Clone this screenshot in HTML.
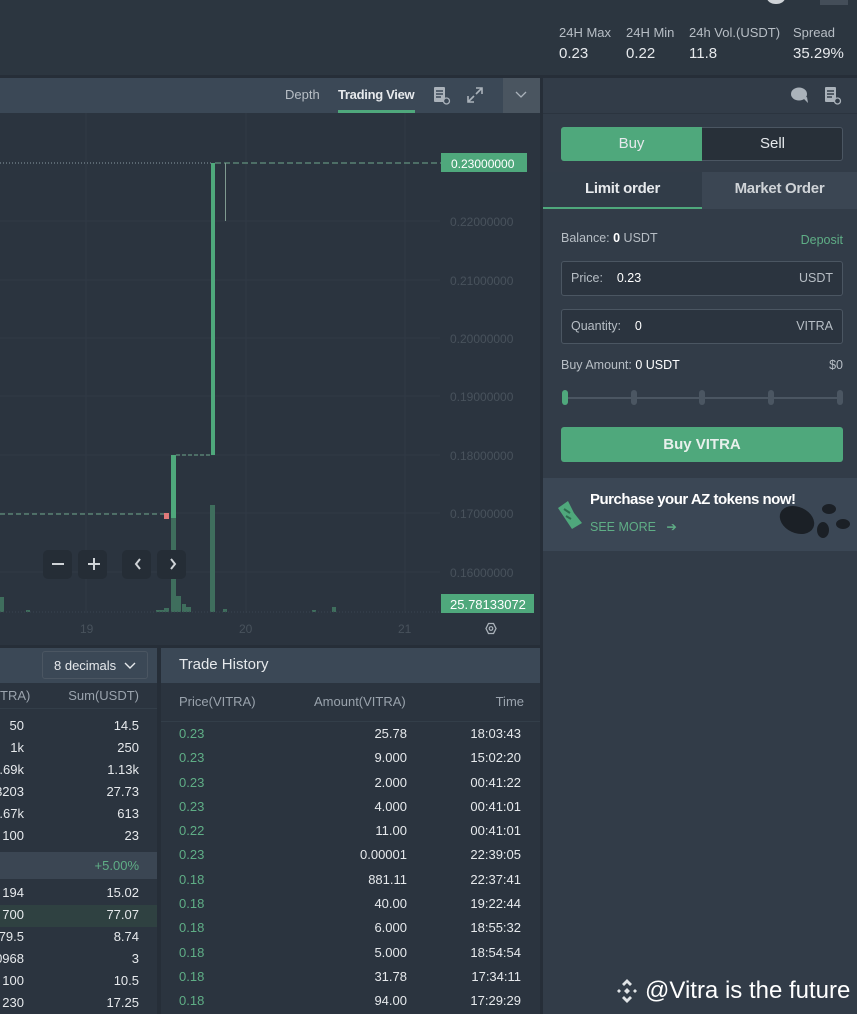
<!DOCTYPE html><html><head><meta charset="utf-8"><style>
*{margin:0;padding:0;box-sizing:border-box}
html,body{width:857px;height:1014px;overflow:hidden}
body{background:#262e38;font-family:"Liberation Sans",sans-serif;position:relative;color:#e6e9ec}
.a{position:absolute;white-space:nowrap}
.g{color:#5fae86}
.m{color:#9aa3ad}
</style></head><body>
<div class="a" style="left:0;top:0;width:857px;height:75px;background:#2c3640"></div>
<div class="a" style="left:767px;top:-8px;width:18px;height:12px;border-radius:50%;background:#cfd3d7"></div>
<div class="a" style="left:820px;top:0;width:28px;height:5px;background:#444e59"></div>
<div class="a" style="left:559px;top:25px;font-size:13px;color:#b7bec5">24H Max</div>
<div class="a" style="left:559px;top:45px;font-size:15px">0.23</div>
<div class="a" style="left:626px;top:25px;font-size:13px;color:#b7bec5">24H Min</div>
<div class="a" style="left:626px;top:45px;font-size:15px">0.22</div>
<div class="a" style="left:689px;top:25px;font-size:13px;color:#b7bec5">24h Vol.(USDT)</div>
<div class="a" style="left:689px;top:45px;font-size:15px">11.8</div>
<div class="a" style="left:793px;top:25px;font-size:13px;color:#b7bec5">Spread</div>
<div class="a" style="left:793px;top:45px;font-size:15px">35.29%</div>

<div class="a" style="left:0;top:78px;width:540px;height:35px;background:#3b4856"></div>
<div class="a" style="left:285px;top:87px;font-size:13px;color:#b7bec5">Depth</div>
<div class="a" style="left:338px;top:87px;font-size:13px;font-weight:bold;letter-spacing:-0.3px">Trading View</div>
<div class="a" style="left:338px;top:110px;width:77px;height:3px;background:#4fa87c"></div>
<svg class="a" style="left:432px;top:86px" width="20" height="20"><rect x="2" y="1" width="11" height="15" rx="1" fill="#aab2ba"/><path d="M4 5h7M4 8h7M4 11h5" stroke="#3b4856" stroke-width="1.4"/><circle cx="14.5" cy="15" r="3" fill="#3b4856" stroke="#aab2ba" stroke-width="1.3"/></svg>
<svg class="a" style="left:466px;top:86px" width="18" height="18" stroke="#aab2ba" stroke-width="1.6" fill="none"><path d="M10 2h6v6M16 2l-6 6M2 10v6h6M2 16l6-6"/></svg>
<div class="a" style="left:503px;top:78px;width:37px;height:35px;background:#4a5560"></div>
<svg class="a" style="left:514px;top:90px" width="14" height="10" stroke="#aab2ba" stroke-width="1.3" fill="none"><path d="M2 2l5 5 5-5"/></svg>

<div class="a" style="left:0;top:113px;width:540px;height:532px;background:#2b343f"></div>
<svg class="a" style="left:0;top:113px" width="540" height="532">
<g stroke="#303a45" stroke-width="1">
<path d="M86 0V500M246 0V500M405 0V500"/>
<path d="M0 108H440M0 167H440M0 225H440M0 283H440M0 342H440M0 400H440M0 459H440"/>
</g>
<path d="M0 50H211" stroke="#8a9aa3" stroke-dasharray="1 2"/>
<path d="M215 50H441" stroke="#6fa88c" stroke-dasharray="6 3"/>
<path d="M0 401H166" stroke="#6fa88c" stroke-dasharray="5 3"/>
<path d="M176 342H211" stroke="#6fa88c" stroke-dasharray="4 2"/>
<rect x="211" y="50" width="4" height="292" fill="#4fa87c"/>
<rect x="225" y="50" width="1" height="58" fill="#7f9a90"/>
<rect x="171" y="342" width="5" height="157" fill="#4fa87c"/>
<rect x="164" y="400" width="5" height="6" fill="#e07a7a"/>
<g fill="#3f6e5d">
<rect x="0" y="484" width="4" height="15"/><rect x="171" y="405" width="5" height="94"/><rect x="176" y="483" width="5" height="16"/><rect x="182" y="491" width="4" height="8"/><rect x="210" y="392" width="5" height="107"/><rect x="223" y="496" width="4" height="3"/><rect x="156" y="497" width="8" height="2"/><rect x="164" y="495" width="5" height="4"/><rect x="186" y="494" width="5" height="5"/><rect x="332" y="494" width="4" height="5"/><rect x="312" y="497" width="4" height="2"/><rect x="26" y="497" width="4" height="2"/></g>
<path d="M0 499H440" stroke="#3a4550" stroke-dasharray="1 2"/>
<g font-family="Liberation Sans" font-size="12" fill="#48525c">
<text x="450" y="113">0.22000000</text><text x="450" y="172">0.21000000</text><text x="450" y="230">0.20000000</text><text x="450" y="288">0.19000000</text><text x="450" y="347">0.18000000</text><text x="450" y="405">0.17000000</text><text x="450" y="464">0.16000000</text>
<text x="80" y="520">19</text><text x="239" y="520">20</text><text x="398" y="520">21</text></g>
<rect x="441" y="40" width="86" height="19" fill="#4fa87c"/>
<text x="451" y="55" font-family="Liberation Sans" font-size="12" fill="#fff">0.23000000</text>
<rect x="441" y="481" width="93" height="19" fill="#4fa87c"/>
<text x="450" y="496" font-family="Liberation Sans" font-size="13" fill="#fff">25.78133072</text>
<path d="M486 515.5l2.5-5h5l2.5 5-2.5 5h-5z" fill="none" stroke="#aab2ba" stroke-width="1.3"/><circle cx="491" cy="515.5" r="1.8" fill="none" stroke="#aab2ba" stroke-width="1.2"/>
<g fill="#252d36"><rect x="43" y="437" width="29" height="29" rx="5"/><rect x="78" y="437" width="29" height="29" rx="5"/><rect x="122" y="437" width="29" height="29" rx="5"/><rect x="157" y="437" width="29" height="29" rx="5"/></g>
<g stroke="#cfd3d7" stroke-width="2" fill="none"><path d="M52 451h12M88 451h12M94 445v12M140 446l-4 5 4 5M171 446l4 5-4 5"/></g>
</svg>

<div class="a" style="left:0;top:648px;width:157px;height:366px;background:#2b343f"></div>
<div class="a" style="left:0;top:648px;width:157px;height:35px;background:#3b4856"></div>
<div class="a" style="left:42px;top:651px;width:106px;height:28px;border:1px solid #4b5662;border-radius:3px;font-size:13px;padding:6px 0 0 11px">8 decimals <svg width="12" height="8" style="margin-left:4px" stroke="#e6e9ec" stroke-width="1.4" fill="none"><path d="M1 1l5 5 5-5"/></svg></div>
<div class="a m" style="left:0;top:688px;font-size:13px">TRA)</div>
<div class="a m" style="right:718px;top:688px;font-size:13px">Sum(USDT)</div>
<div class="a" style="left:0;top:708px;width:157px;height:1px;background:#333e49"></div>
<div class="a" style="left:0;top:852px;width:157px;height:27px;background:#3b4653"></div>
<div class="a g" style="right:718px;top:858px;font-size:13px">+5.00%</div>
<div class="a" style="left:0;top:905px;width:157px;height:22px;background:#2f4141"></div>
<div class="a" style="left:0;top:715px;width:139px;font-size:13px;line-height:22px">
<div style="position:relative;height:22px"><span style="position:absolute;right:115px">50</span><span style="position:absolute;right:0">14.5</span></div>
<div style="position:relative;height:22px"><span style="position:absolute;right:115px">1k</span><span style="position:absolute;right:0">250</span></div>
<div style="position:relative;height:22px"><span style="position:absolute;right:115px">.69k</span><span style="position:absolute;right:0">1.13k</span></div>
<div style="position:relative;height:22px"><span style="position:absolute;right:115px">3203</span><span style="position:absolute;right:0">27.73</span></div>
<div style="position:relative;height:22px"><span style="position:absolute;right:115px">.67k</span><span style="position:absolute;right:0">613</span></div>
<div style="position:relative;height:22px"><span style="position:absolute;right:115px">100</span><span style="position:absolute;right:0">23</span></div>
</div>
<div class="a" style="left:0;top:882px;width:139px;font-size:13px;line-height:22px">
<div style="position:relative;height:22px"><span style="position:absolute;right:115px">194</span><span style="position:absolute;right:0">15.02</span></div>
<div style="position:relative;height:22px"><span style="position:absolute;right:115px">700</span><span style="position:absolute;right:0">77.07</span></div>
<div style="position:relative;height:22px"><span style="position:absolute;right:115px">79.5</span><span style="position:absolute;right:0">8.74</span></div>
<div style="position:relative;height:22px"><span style="position:absolute;right:115px">0968</span><span style="position:absolute;right:0">3</span></div>
<div style="position:relative;height:22px"><span style="position:absolute;right:115px">100</span><span style="position:absolute;right:0">10.5</span></div>
<div style="position:relative;height:22px"><span style="position:absolute;right:115px">230</span><span style="position:absolute;right:0">17.25</span></div>
</div>

<div class="a" style="left:161px;top:648px;width:379px;height:366px;background:#2b343f"></div>
<div class="a" style="left:161px;top:648px;width:379px;height:35px;background:#3b4856"></div>
<div class="a" style="left:179px;top:656px;font-size:15px">Trade History</div>
<div class="a m" style="left:179px;top:694px;font-size:13px">Price(VITRA)</div>
<div class="a m" style="left:314px;top:694px;font-size:13px">Amount(VITRA)</div>
<div class="a m" style="right:333px;top:694px;font-size:13px">Time</div>
<div class="a" style="left:161px;top:721px;width:379px;height:1px;background:#333e49"></div>
<div class="a" style="left:179px;top:722px;width:342px;font-size:13px;line-height:24.3px">
<div style="position:relative;height:24.3px"><span class="g">0.23</span><span style="position:absolute;right:114px">25.78</span><span style="position:absolute;right:0">18:03:43</span></div>
<div style="position:relative;height:24.3px"><span class="g">0.23</span><span style="position:absolute;right:114px">9.000</span><span style="position:absolute;right:0">15:02:20</span></div>
<div style="position:relative;height:24.3px"><span class="g">0.23</span><span style="position:absolute;right:114px">2.000</span><span style="position:absolute;right:0">00:41:22</span></div>
<div style="position:relative;height:24.3px"><span class="g">0.23</span><span style="position:absolute;right:114px">4.000</span><span style="position:absolute;right:0">00:41:01</span></div>
<div style="position:relative;height:24.3px"><span class="g">0.22</span><span style="position:absolute;right:114px">11.00</span><span style="position:absolute;right:0">00:41:01</span></div>
<div style="position:relative;height:24.3px"><span class="g">0.23</span><span style="position:absolute;right:114px">0.00001</span><span style="position:absolute;right:0">22:39:05</span></div>
<div style="position:relative;height:24.3px"><span class="g">0.18</span><span style="position:absolute;right:114px">881.11</span><span style="position:absolute;right:0">22:37:41</span></div>
<div style="position:relative;height:24.3px"><span class="g">0.18</span><span style="position:absolute;right:114px">40.00</span><span style="position:absolute;right:0">19:22:44</span></div>
<div style="position:relative;height:24.3px"><span class="g">0.18</span><span style="position:absolute;right:114px">6.000</span><span style="position:absolute;right:0">18:55:32</span></div>
<div style="position:relative;height:24.3px"><span class="g">0.18</span><span style="position:absolute;right:114px">5.000</span><span style="position:absolute;right:0">18:54:54</span></div>
<div style="position:relative;height:24.3px"><span class="g">0.18</span><span style="position:absolute;right:114px">31.78</span><span style="position:absolute;right:0">17:34:11</span></div>
<div style="position:relative;height:24.3px"><span class="g">0.18</span><span style="position:absolute;right:114px">94.00</span><span style="position:absolute;right:0">17:29:29</span></div>
</div>

<div class="a" style="left:543px;top:78px;width:314px;height:936px;background:#323c48"></div>
<div class="a" style="left:543px;top:113px;width:314px;height:1px;background:#2b343f"></div>
<svg class="a" style="left:789px;top:86px" width="22" height="20"><ellipse cx="10" cy="8" rx="8" ry="6.5" fill="#aab2ba"/><path d="M14 12l5 5-1-6z" fill="#aab2ba"/></svg>
<svg class="a" style="left:823px;top:86px" width="20" height="20"><rect x="2" y="1" width="11" height="15" rx="1" fill="#aab2ba"/><path d="M4 5h7M4 8h7M4 11h5" stroke="#323c48" stroke-width="1.4"/><circle cx="14.5" cy="15" r="3" fill="#323c48" stroke="#aab2ba" stroke-width="1.3"/></svg>
<div class="a" style="left:561px;top:127px;width:282px;height:34px;border:1px solid #4b5662;border-radius:3px;background:#283039"></div>
<div class="a" style="left:561px;top:127px;width:141px;height:34px;background:#4fa87c;border-radius:3px 0 0 3px;text-align:center;line-height:34px;font-size:15px">Buy</div>
<div class="a" style="left:702px;top:127px;width:141px;height:34px;text-align:center;line-height:34px;font-size:15px">Sell</div>
<div class="a" style="left:543px;top:172px;width:159px;height:37px;background:#313c48;text-align:center;line-height:34px;font-size:15px;font-weight:bold;border-bottom:2px solid #4fa87c;letter-spacing:-0.3px">Limit order</div>
<div class="a" style="left:702px;top:172px;width:155px;height:37px;background:#3b4653;text-align:center;line-height:34px;font-size:15px;font-weight:bold;color:#cfd3d7;letter-spacing:-0.3px">Market Order</div>
<div class="a" style="left:561px;top:231px;font-size:12.5px;color:#b7bec5">Balance: <b style="color:#fff">0</b> USDT</div>
<div class="a g" style="right:14px;top:233px;font-size:12.5px">Deposit</div>
<div class="a" style="left:561px;top:261px;width:282px;height:35px;border:1px solid #4b5662;border-radius:3px;background:#2b343f;font-size:12.5px;line-height:33px;padding:0 9px;color:#b7bec5">Price:&nbsp;&nbsp;&nbsp; <span style="color:#fff">0.23</span><span style="float:right">USDT</span></div>
<div class="a" style="left:561px;top:309px;width:282px;height:35px;border:1px solid #4b5662;border-radius:3px;background:#2b343f;font-size:12.5px;line-height:33px;padding:0 9px;color:#b7bec5">Quantity:&nbsp;&nbsp;&nbsp; <span style="color:#fff">0</span><span style="float:right">VITRA</span></div>
<div class="a" style="left:561px;top:358px;font-size:12.5px;color:#b7bec5">Buy Amount: <span style="color:#fff">0 USDT</span></div>
<div class="a" style="right:14px;top:358px;font-size:12.5px;color:#b7bec5">$0</div>
<div class="a" style="left:565px;top:397px;width:275px;height:2px;background:#4b5662"></div>
<div class="a" style="left:562px;top:390px;width:6px;height:15px;border-radius:3px;background:#4fa87c"></div>
<div class="a" style="left:631px;top:390px;width:6px;height:15px;border-radius:3px;background:#4b5662"></div>
<div class="a" style="left:699px;top:390px;width:6px;height:15px;border-radius:3px;background:#4b5662"></div>
<div class="a" style="left:768px;top:390px;width:6px;height:15px;border-radius:3px;background:#4b5662"></div>
<div class="a" style="left:837px;top:390px;width:6px;height:15px;border-radius:3px;background:#4b5662"></div>
<div class="a" style="left:561px;top:427px;width:282px;height:35px;background:#4fa87c;border-radius:3px;text-align:center;line-height:35px;font-size:15px;font-weight:bold;color:#e8f0ec">Buy VITRA</div>
<div class="a" style="left:543px;top:478px;width:314px;height:73px;background:#3b4755"></div>
<svg class="a" style="left:555px;top:500px" width="30" height="30"><path d="M3 8l10-7 6 12 8 10-10 6z" fill="#4fa87c"/><path d="M9 9l6 4M11 16l5 3" stroke="#2f6e50" stroke-width="2"/></svg>
<div class="a" style="left:590px;top:491px;font-size:15px;font-weight:bold;color:#fff;letter-spacing:-0.5px">Purchase your AZ tokens now!</div>
<div class="a g" style="left:590px;top:519px;font-size:12.5px">SEE MORE &nbsp;&nbsp;➔</div>
<svg class="a" style="left:775px;top:500px" width="80" height="48"><ellipse cx="22" cy="20" rx="18" ry="13" fill="#1b2026" transform="rotate(25 22 20)"/><ellipse cx="54" cy="9" rx="7" ry="5" fill="#1b2026"/><ellipse cx="48" cy="30" rx="6" ry="8" fill="#1b2026"/><ellipse cx="68" cy="24" rx="7" ry="5" fill="#1b2026"/></svg>
<svg class="a" style="left:613px;top:977px" width="28" height="28" fill="#e0e3e6"><path d="M14 2l5 5-2 2-3-3-3 3-2-2zM14 26l5-5-2-2-3 3-3-3-2 2zM4 14l2-2 2 2-2 2zM24 14l-2-2-2 2 2 2zM14 11l3 3-3 3-3-3z"/></svg>
<div class="a" style="left:645px;top:977px;font-size:24px;color:#fff">@Vitra is the future</div>
</body></html>
